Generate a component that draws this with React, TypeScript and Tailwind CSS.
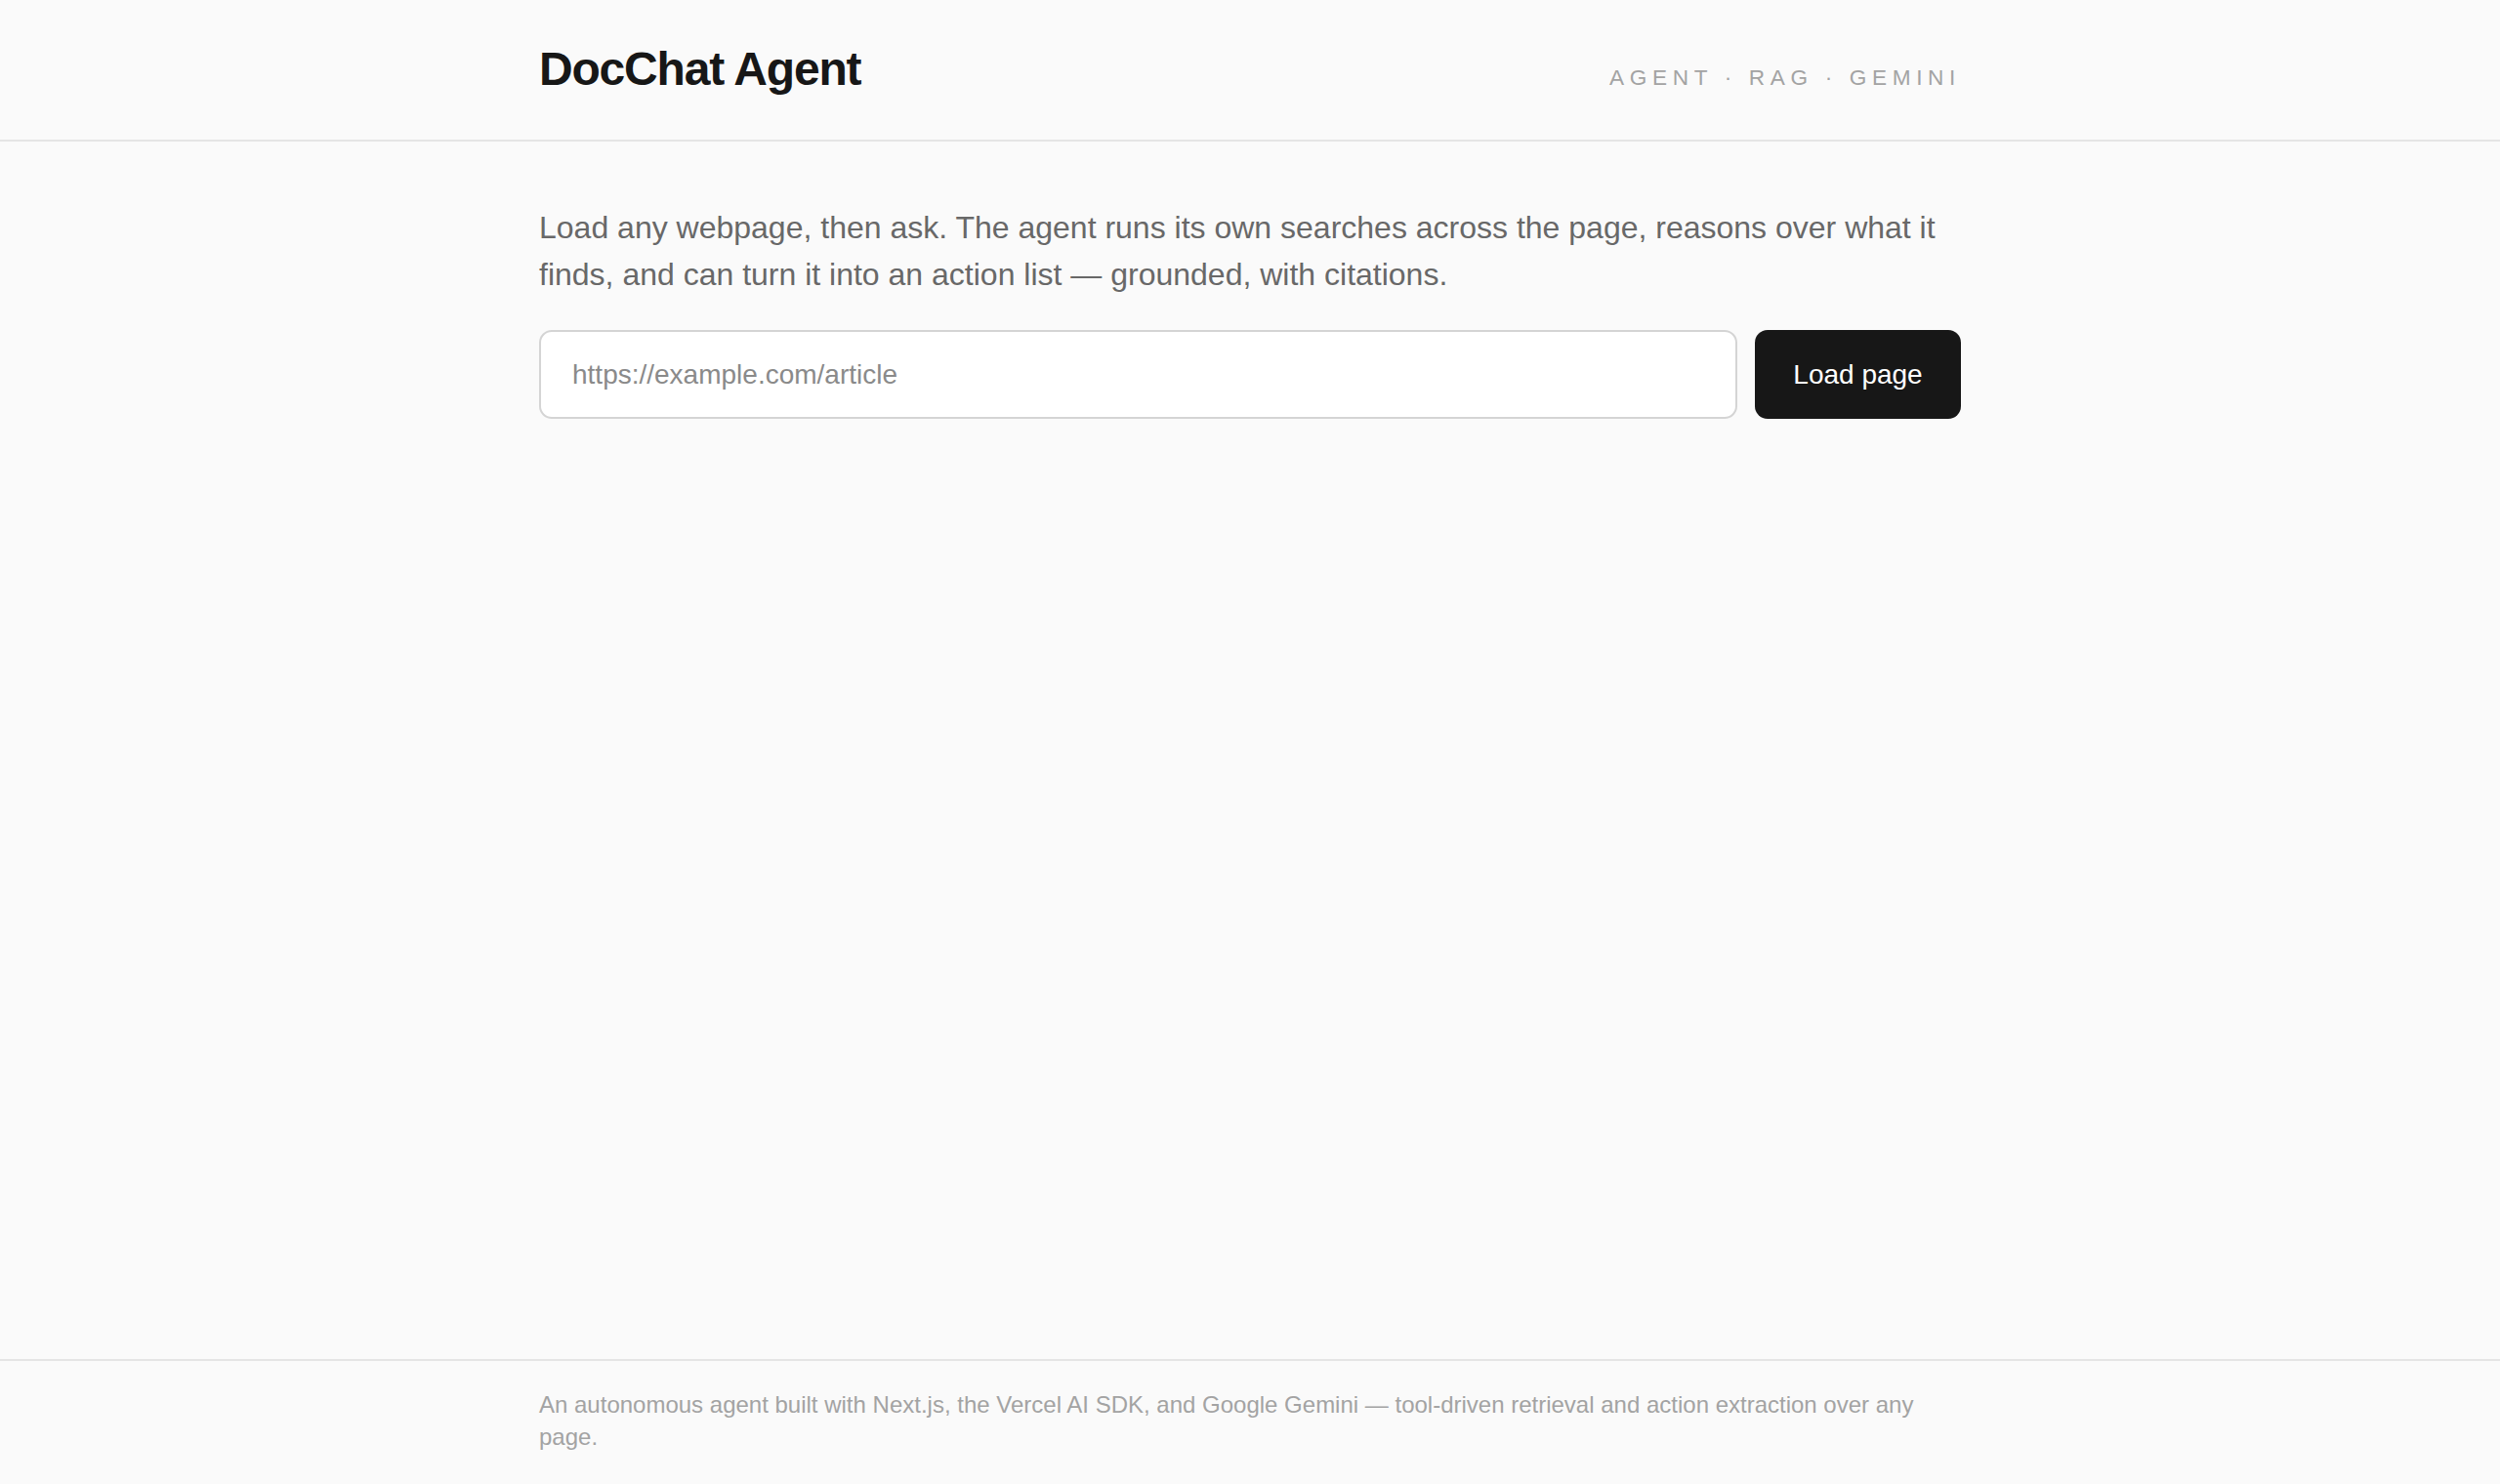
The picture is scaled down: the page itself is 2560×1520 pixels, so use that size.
import React from 'react';

const font = { fontFamily: '"Liberation Sans", Arial, sans-serif' };

export default function App() {
  return (
    <div className="flex h-screen flex-col bg-[#fafafa] text-[#171717]" style={font}>
      <header className="border-b-2 border-[#e5e5e5]">
        <div className="mx-auto flex w-[1456px] items-baseline justify-between pt-[42px] pb-[43px]">
          <h1 className="text-[48px] font-bold leading-[58px] tracking-[-0.025em]">DocChat Agent</h1>
          <span className="text-[22.6px] uppercase tracking-[0.25em] text-[#a3a3a3]">Agent · RAG · Gemini</span>
        </div>
      </header>

      <main className="flex-1">
        <div className="mx-auto w-[1456px] pt-[64px]">
          <p className="text-[32px] leading-[48px] text-[#686868]">
            Load any webpage, then ask. The agent runs its own searches across the page, reasons over what it
            finds, and can turn it into an action list — grounded, with citations.
          </p>
          <form className="mt-[33px] flex gap-[18px]" onSubmit={(e) => e.preventDefault()}>
            <input
              type="text"
              placeholder="https://example.com/article"
              className="h-[91px] flex-1 rounded-[13px] border-2 border-[#d4d4d4] bg-white px-[32px] text-[28px] text-[#171717] outline-none placeholder:text-[#8a8a8a]"
            />
            <button
              type="submit"
              className="h-[91px] w-[211px] rounded-[13px] bg-[#171717] text-[28px] text-white"
            >
              Load page
            </button>
          </form>
        </div>
      </main>

      <footer className="border-t-2 border-[#e5e5e5]">
        <div className="mx-auto w-[1456px] pt-[28px] pb-[32px] text-[24px] leading-[33px] text-[#a3a3a3]">
          An autonomous agent built with Next.js, the Vercel AI SDK, and Google Gemini — tool-driven retrieval and action extraction over any page.
        </div>
      </footer>
    </div>
  );
}
